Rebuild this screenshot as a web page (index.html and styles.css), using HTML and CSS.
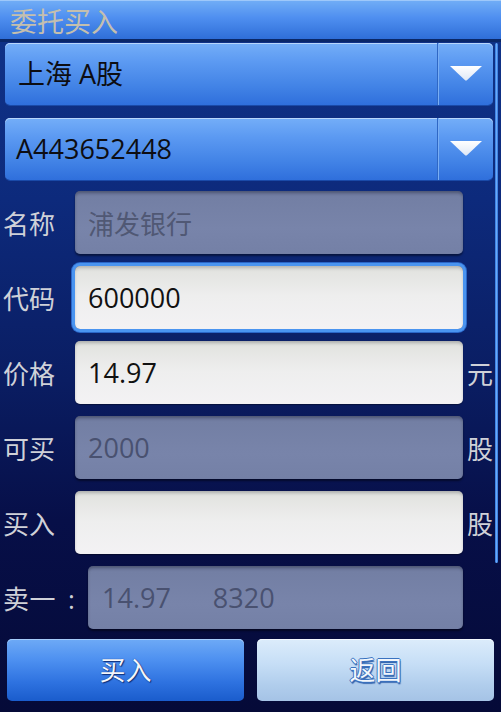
FILE: index.html
```html
<!DOCTYPE html>
<html lang="zh-CN">
<head>
<meta charset="utf-8">
<title>委托买入</title>
<link rel="stylesheet" href="styles.css">
</head>
<body>
<div class="screen">
  <div class="titlebar">委托买入</div>
  <div class="content">
    <div class="spinner first">
      <div class="spinner-text">上海 A股</div>
      <div class="spinner-arrow">
        <svg width="34" height="16" viewBox="0 0 34 16"><defs><linearGradient id="ag1" x1="0" y1="0" x2="0" y2="1"><stop offset="0" stop-color="#ffffff"/><stop offset="1" stop-color="#dfe8f6"/></linearGradient></defs><path d="M1 1 L33 1 L18.2 15 Q17 16 15.8 15 Z" fill="url(#ag1)"/></svg>
      </div>
    </div>
    <div class="spinner">
      <div class="spinner-text account">A443652448</div>
      <div class="spinner-arrow">
        <svg width="34" height="16" viewBox="0 0 34 16"><defs><linearGradient id="ag2" x1="0" y1="0" x2="0" y2="1"><stop offset="0" stop-color="#ffffff"/><stop offset="1" stop-color="#dfe8f6"/></linearGradient></defs><path d="M1 1 L33 1 L18.2 15 Q17 16 15.8 15 Z" fill="url(#ag2)"/></svg>
      </div>
    </div>

    <div class="form">
      <div class="row">
        <div class="label">名称</div>
        <div class="field disabled name">浦发银行</div>
        <div class="unit"></div>
      </div>
      <div class="row">
        <div class="label">代码</div>
        <div class="field focused">600000</div>
        <div class="unit"></div>
      </div>
      <div class="row">
        <div class="label">价格</div>
        <div class="field">14.97</div>
        <div class="unit">元</div>
      </div>
      <div class="row">
        <div class="label">可买</div>
        <div class="field disabled">2000</div>
        <div class="unit">股</div>
      </div>
      <div class="row">
        <div class="label">买入</div>
        <div class="field"></div>
        <div class="unit">股</div>
      </div>
      <div class="row sell">
        <div class="label wide">卖一<span class="colon">:</span></div>
        <div class="field disabled"><span class="price">14.97</span><span class="qty">8320</span></div>
        <div class="unit"></div>
      </div>
    </div>

    <div class="buttons">
      <div class="btn btn-buy">买入</div>
      <div class="btn btn-back">返回</div>
    </div>
  </div>
  <div class="scrollbar"></div>
</div>
</body>
</html>
```

FILE: styles.css
```css
html, body {
  margin: 0;
  padding: 0;
}

body {
  width: 501px;
  height: 712px;
  overflow: hidden;
  font-family: "Open Sans", "Noto Sans CJK SC", sans-serif;
  background: #050a38;
}

.screen {
  position: relative;
  width: 501px;
  height: 712px;
  background: linear-gradient(to bottom, #10348a 0px, #0d2a7c 200px, #0a1d62 380px, #070f48 520px, #050a38 712px);
}

.titlebar {
  height: 39px;
  line-height: 41px;
  padding-left: 10px;
  font-family: "Noto Sans CJK SC", sans-serif;
  font-size: 27px;
  color: #c4bfae;
  background: linear-gradient(to bottom, #72aef6 0%, #4f8ff0 45%, #2f6ed8 100%);
  border-bottom: 3px solid #0a2768;
  box-shadow: inset 0 1px 0 #9ec8fa;
  overflow: hidden;
}

.content {
  padding: 1px 8px 0 5px;
}

.spinner {
  display: flex;
  height: 62px;
  border-radius: 5px;
  background: linear-gradient(to bottom, #74aef8 0%, #5c9af2 30%, #4283e6 70%, #2f6fdc 100%);
  box-shadow: inset 0 1px 0 #b8d6fb, 0 1px 0 #1a4aa8;
  overflow: hidden;
}

.spinner.first {
  margin-bottom: 13px;
}

.spinner-text {
  flex: 1;
  padding-left: 13px;
  line-height: 62px;
  font-size: 27px;
  color: #0d0d12;
}

.spinner-text.account {
  padding-left: 11px;
}

.spinner-arrow {
  width: 56px;
  display: flex;
  align-items: center;
  justify-content: center;
  padding-bottom: 2px;
  box-sizing: border-box;
  border-left: 1px solid #2f67c4;
  box-shadow: inset 1px 0 0 #79aef4;
}

.form {
  margin-top: 11px;
}

.row {
  display: flex;
  align-items: center;
  height: 63px;
  margin-bottom: 12px;
}

.label {
  width: 75px;
  margin-left: -5px;
  padding-left: 3px;
  box-sizing: border-box;
  flex: none;
  font-family: "Noto Sans CJK SC", sans-serif;
  font-size: 26px;
  color: #cfd1d8;
  white-space: nowrap;
}

.label.wide {
  width: 88px;
  letter-spacing: 0.5px;
}

.colon {
  margin-left: 12px;
  font-family: "Open Sans", sans-serif;
}

.field {
  flex: 1;
  height: 63px;
  box-sizing: border-box;
  border-radius: 5px;
  padding-left: 13px;
  line-height: 63px;
  font-size: 27px;
  color: #111111;
  background: linear-gradient(to bottom, #d4d6d4 0px, #e3e4e1 6px, #eeeeee 30px, #f3f2f4 100%);
  box-shadow: inset 0 2px 3px rgba(0,0,0,0.18), 0 1px 1px rgba(0,0,0,0.35);
}

.field.focused {
  box-shadow: 0 0 0 3px #4a94f0, 0 0 0 4px #2a66c8, inset 0 2px 3px rgba(0,0,0,0.15);
}

.field.disabled {
  color: #495170;
  background: linear-gradient(to bottom, #68739a 0px, #737fa4 6px, #7884aa 60%, #7480a6 100%);
  box-shadow: inset 0 2px 3px rgba(0,0,0,0.25), 0 2px 2px rgba(0,0,0,0.45);
}

.field.name {
  font-family: "Noto Sans CJK SC", sans-serif;
  font-size: 26px;
  color: #505874;
}

.sell .field {
  padding-left: 14px;
}

.sell .qty {
  margin-left: 42px;
}

.unit {
  width: 30px;
  flex: none;
  padding-left: 4px;
  box-sizing: border-box;
  font-family: "Noto Sans CJK SC", sans-serif;
  font-size: 26px;
  color: #cfd1d8;
}

.buttons {
  display: flex;
  gap: 13px;
  margin-top: -2px;
  margin-left: 2px;
  margin-right: -1px;
}

.btn {
  flex: 1;
  height: 62px;
  border-radius: 5px;
  line-height: 60px;
  text-align: center;
  font-family: "Noto Sans CJK SC", sans-serif;
  font-size: 26px;
}

.btn-buy {
  color: #f4f6fb;
  background: linear-gradient(to bottom, #6eaaf6 0%, #4c8ff0 35%, #2e72e0 70%, #1a5ccc 100%);
  box-shadow: inset 0 1px 0 #a6cdfb;
  text-shadow: 1px 1px 1px #0c2f7a, 0 0 1px #0c2f7a;
}

.btn-back {
  color: #f3f7fc;
  background: linear-gradient(to bottom, #dcecfb 0%, #c6def6 40%, #b0cdec 75%, #a5c3e6 100%);
  box-shadow: inset 0 1px 0 #f4f9ff;
  text-shadow: -1px 0 0 #3a72c0, 1px 0 0 #3a72c0, 0 -1px 0 #3a72c0, 0 1px 0 #3a72c0, 1px 2px 1px #2a5ca8;
}

.scrollbar {
  position: absolute;
  left: 495px;
  top: 43px;
  width: 3px;
  height: 520px;
  border-radius: 2px;
  background: linear-gradient(to right, #2a70dc, #6aaaf6, #2a70dc);
}
```
